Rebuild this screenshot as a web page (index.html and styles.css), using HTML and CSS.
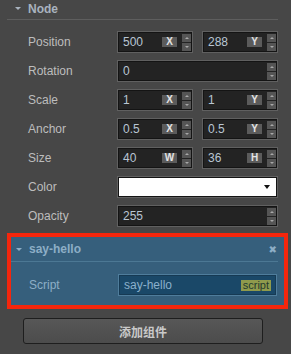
FILE: index.html
```html
<!DOCTYPE html>
<html>
  <head>
    <meta name="viewport" content="width=device-width, initial-scale=1.0" />
    <link rel="stylesheet" href="styles.css">
  </head>
  <body>
    <div class="section-head">
      <span class="caret"></span>
      <span class="section-title">Node</span>
    </div>

    <div class="props">
      <div class="prop">
        <div class="label">Position</div>
        <div class="fields">
          <div class="field"><span class="value">500</span><span class="tag">X</span><span class="stepper"><i class="up"></i><i class="down"></i></span></div>
          <div class="field"><span class="value">288</span><span class="tag">Y</span><span class="stepper"><i class="up"></i><i class="down"></i></span></div>
        </div>
      </div>
      <div class="prop">
        <div class="label">Rotation</div>
        <div class="fields">
          <div class="field"><span class="value">0</span><span class="stepper"><i class="up"></i><i class="down"></i></span></div>
        </div>
      </div>
      <div class="prop">
        <div class="label">Scale</div>
        <div class="fields">
          <div class="field"><span class="value">1</span><span class="tag">X</span><span class="stepper"><i class="up"></i><i class="down"></i></span></div>
          <div class="field"><span class="value">1</span><span class="tag">Y</span><span class="stepper"><i class="up"></i><i class="down"></i></span></div>
        </div>
      </div>
      <div class="prop">
        <div class="label">Anchor</div>
        <div class="fields">
          <div class="field"><span class="value">0.5</span><span class="tag">X</span><span class="stepper"><i class="up"></i><i class="down"></i></span></div>
          <div class="field"><span class="value">0.5</span><span class="tag">Y</span><span class="stepper"><i class="up"></i><i class="down"></i></span></div>
        </div>
      </div>
      <div class="prop">
        <div class="label">Size</div>
        <div class="fields">
          <div class="field"><span class="value">40</span><span class="tag">W</span><span class="stepper"><i class="up"></i><i class="down"></i></span></div>
          <div class="field"><span class="value">36</span><span class="tag">H</span><span class="stepper"><i class="up"></i><i class="down"></i></span></div>
        </div>
      </div>
      <div class="prop">
        <div class="label">Color</div>
        <div class="fields">
          <div class="color-field"><span class="drop"></span></div>
        </div>
      </div>
      <div class="prop">
        <div class="label">Opacity</div>
        <div class="fields">
          <div class="field"><span class="value">255</span><span class="stepper"><i class="up"></i><i class="down"></i></span></div>
        </div>
      </div>
    </div>

    <div class="component">
      <div class="component-inner">
        <div class="component-head">
          <span class="caret caret-blue"></span>
          <span class="component-title">say-hello</span>
          <span class="close">&#x2716;</span>
        </div>
        <div class="script-row">
          <div class="label label-blue">Script</div>
          <div class="script-field">
            <span class="script-value">say-hello</span>
            <span class="script-tag">script</span>
          </div>
        </div>
      </div>
    </div>

    <div class="add-wrap">
      <button class="add-btn">添加组件</button>
    </div>
  </body>
</html>
```

FILE: styles.css
```css
* {
  box-sizing: border-box;
  margin: 0;
  padding: 0;
}

body {
  background: #474747;
  font-family: "Liberation Sans", Arial, sans-serif;
  font-size: 12px;
  color: #bdbdbd;
  width: 291px;
  height: 354px;
  overflow: hidden;
}

.section-head {
  height: 20px;
  margin: 0 13px 0 7px;
  padding-left: 8px;
  border-bottom: 1px solid #5e5e5e;
  display: flex;
  align-items: center;
  padding-bottom: 2px;
}

.caret {
  width: 0;
  height: 0;
  border-left: 3px solid transparent;
  border-right: 3px solid transparent;
  border-top: 3px solid #a9b3bf;
  margin-right: 7px;
}

.section-title {
  font-weight: bold;
  color: #a9b3bf;
}

.props {
  padding: 11px 13px 0 28px;
  display: flex;
  flex-direction: column;
  gap: 7px;
}

.prop {
  display: flex;
  align-items: center;
  height: 22px;
}

.label {
  width: 89px;
  color: #bdbdbd;
}

.fields {
  flex: 1;
  display: flex;
  gap: 9px;
  height: 22px;
}

.field {
  flex: 1;
  display: flex;
  align-items: center;
  background: #232323;
  border: 1px solid #606060;
  box-shadow: inset 0 0 0 1px #141414;
  padding: 0 1px 0 5px;
}

.value {
  flex: 1;
  color: #b9c6d3;
}

.tag {
  width: 15px;
  height: 10px;
  background: #5b5b5b;
  color: #e4e4e4;
  font-size: 10px;
  font-weight: bold;
  line-height: 10px;
  text-align: center;
  margin-right: 5px;
}

.stepper {
  width: 9px;
  height: 17px;
  display: flex;
  flex-direction: column;
  gap: 1px;
}

.stepper i {
  flex: 1;
  background: #555555;
  display: flex;
  align-items: center;
  justify-content: center;
}

.stepper i::after {
  content: "";
  border-left: 2px solid transparent;
  border-right: 2px solid transparent;
}

.stepper .up::after {
  border-bottom: 2px solid #a8a8a8;
}

.stepper .down::after {
  border-top: 2px solid #a8a8a8;
}

.color-field {
  flex: 1;
  background: #ffffff;
  border: 1px solid #606060;
  box-shadow: inset 0 0 0 1px #141414;
  display: flex;
  align-items: center;
  justify-content: flex-end;
  padding-right: 7px;
}

.drop {
  border-left: 3px solid transparent;
  border-right: 3px solid transparent;
  border-top: 4px solid #111111;
}

.component {
  margin: 6px 3px 0 7px;
  border: 4px solid #f5260c;
}

.component-inner {
  background: #365f7c;
  padding: 0 0 9px 0;
}

.component-head {
  height: 25px;
  margin-right: 6px;
  padding-left: 5px;
  border-bottom: 1px solid #4c7894;
  display: flex;
  align-items: center;
}

.caret-blue {
  border-top-color: #8daec6;
}

.component-title {
  flex: 1;
  font-weight: bold;
  color: #8daec6;
}

.close {
  color: #8daec6;
  font-size: 10px;
  font-weight: bold;
  font-family: "DejaVu Sans", sans-serif;
  margin-right: 1px;
}

.script-row {
  display: flex;
  align-items: center;
  padding: 12px 7px 0 18px;
}

.label-blue {
  color: #8daec6;
}

.script-field {
  flex: 1;
  height: 22px;
  display: flex;
  align-items: center;
  background: #1a4868;
  border: 1px solid #4f7d9c;
  box-shadow: inset 0 0 0 1px #163a54;
  padding: 0 5px 0 5px;
}

.script-value {
  flex: 1;
  color: #8ab0cc;
}

.script-tag {
  background: #8f9a4c;
  color: #253a2e;
  font-size: 11px;
  line-height: 11px;
  height: 11px;
  padding: 0 2px;
}

.add-wrap {
  padding: 9px 28px 0 23px;
}

.add-btn {
  width: 240px;
  height: 26px;
  background: linear-gradient(#575757, #4c4c4c);
  border: 1px solid #1e1e1e;
  border-radius: 3px;
  color: #c9c9c9;
  font-family: "Liberation Sans", "Noto Sans CJK SC", sans-serif;
  font-size: 12px;
  font-weight: bold;
}
```
